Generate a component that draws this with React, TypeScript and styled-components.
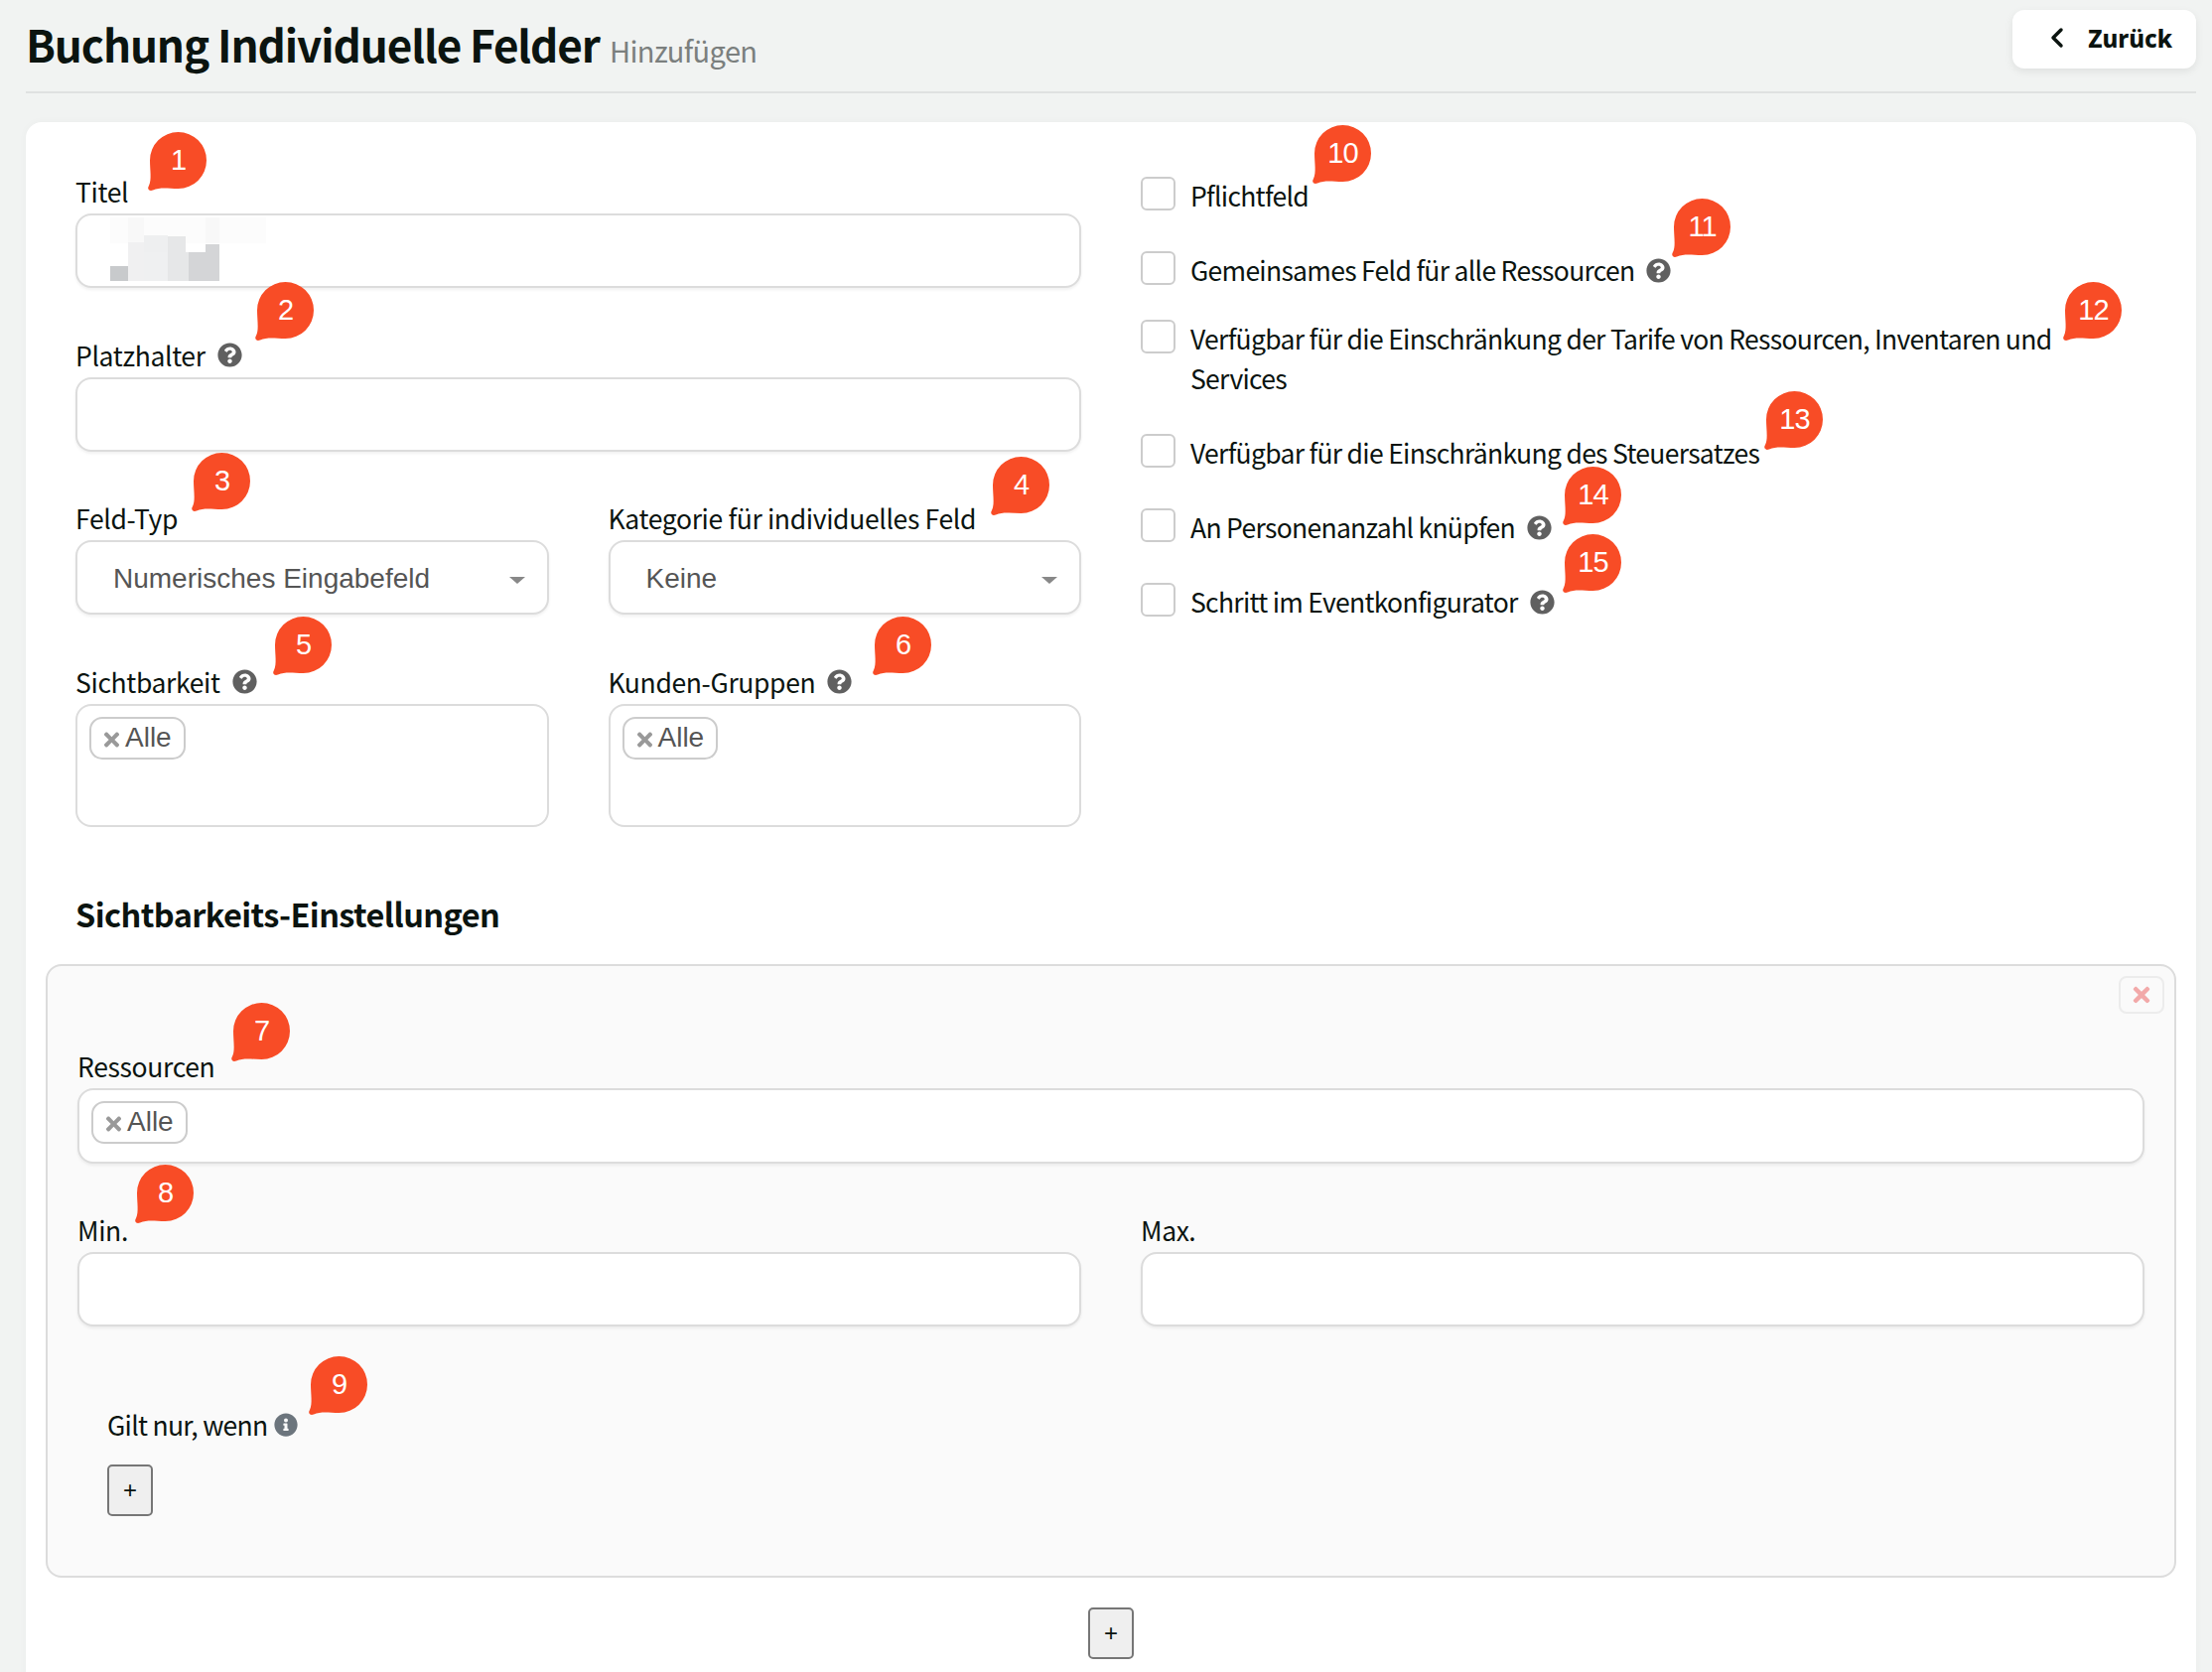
import {ReactNode} from "react";
import styled, {createGlobalStyle} from "styled-components";
import {ChevronLeft} from "lucide-react";
import {FaInfoCircle, FaQuestionCircle, FaTimes} from "react-icons/fa";

const GlobalStyle = createGlobalStyle`
    html, body {
        margin: 0;
        padding: 0;
        background: #f1f3f2;
        overflow: hidden;
    }
`;

const SANS = `"Noto Sans CJK SC", "Noto Sans", sans-serif`;
const HELVETICA = `"Liberation Sans", Arial, sans-serif`;

const Page = styled.div`
    position: relative;
    width: 2228px;
    height: 1684px;
    overflow: hidden;
    box-sizing: border-box;
    padding: 0 16px 0 26px;
    font-family: ${SANS};
    color: #0b1410;
    background: #f1f3f2;
`;

const Header = styled.header`
    display: flex;
    justify-content: space-between;
    align-items: flex-start;
    height: 92px;
    border-bottom: 2px solid #dfe1e1;
    box-sizing: content-box;
`;

const TitleLine = styled.div`
    display: flex;
    align-items: baseline;
    gap: 10px;
    padding-top: 14px;
    line-height: 60px;
`;

const Title = styled.h1`
    margin: 0;
    font-size: 44px;
    font-weight: 600;
    letter-spacing: -1.1px;
    line-height: 60px;
`;

const Subtitle = styled.small`
    font-size: 29px;
    letter-spacing: -0.6px;
    color: #7b7f7e;
`;

const BackButton = styled.button`
    display: flex;
    align-items: center;
    justify-content: flex-end;
    gap: 15px;
    width: 185px;
    height: 59px;
    margin-top: 10px;
    padding: 0 24px 3px 0;
    border: none;
    border-radius: 12px;
    background: #fff;
    box-shadow: 0 3px 8px rgba(0, 0, 0, 0.08);
    font-family: "Noto Sans", sans-serif;
    font-size: 24px;
    font-weight: 800;
    color: #0b1410;
`;

const Card = styled.main`
    margin-top: 29px;
    height: 1600px;
    box-sizing: border-box;
    padding: 52px 20px 0;
    background: #fff;
    border-radius: 16px 16px 0 0;
    box-shadow: 0 0 8px rgba(0, 0, 0, 0.03);
`;

const Section = styled.div`
    padding: 0 30px;
`;

const Columns = styled.div`
    display: grid;
    grid-template-columns: 1fr 1fr;
    column-gap: 60px;
`;

const PanelColumns = styled(Columns)`
    margin-top: 2px;
`;

const FieldBox = styled.div<{ $last?: boolean }>`
    margin-bottom: ${(p) => (p.$last ? 0 : "49.5px")};
`;

const Label = styled.label`
    display: flex;
    align-items: center;
    gap: 12px;
    height: 35px;
    margin-bottom: 5px;
    font-size: 26.5px;
    letter-spacing: -0.35px;
    line-height: 35px;
`;

const Control = styled.div<{ $tall?: boolean }>`
    position: relative;
    box-sizing: border-box;
    height: ${(p) => (p.$tall ? "124px" : "75px")};
    border: 2px solid #dcdcdc;
    border-radius: 16px;
    background: #fff;
    box-shadow: ${(p) => (p.$tall ? "none" : "0 2px 3px rgba(0, 0, 0, 0.06)")};
`;

const MultiControl = styled(Control)`
    padding: 11px 12px;
`;

const ResourceControl = styled(MultiControl)`
    height: 76px;
`;

const SelectControl = styled(Control)`
    display: flex;
    align-items: center;
    padding: 2px 22px 0 36px;
    font-family: ${HELVETICA};
    font-size: 28px;
    color: #555;
`;

const Caret = styled.span`
    margin-left: auto;
    width: 0;
    height: 0;
    border-left: 8px solid transparent;
    border-right: 8px solid transparent;
    border-top: 7px solid #888;
    margin-top: 3px;
`;

const Tag = styled.span`
    display: inline-flex;
    align-items: center;
    box-sizing: border-box;
    height: 43px;
    padding: 0 12px 0 10px;
    border: 2px solid #ccc;
    border-radius: 13px;
    background: #fff;
    font-family: ${HELVETICA};
    font-size: 28px;
    color: #555;

    svg {
        width: 21px;
        height: 22px;
        margin: 3px 3px 0 0;
        color: #999;
    }
`;

const HelpIcon = styled(FaQuestionCircle)`
    width: 25px;
    height: 25px;
    flex: none;
    color: #606060;
`;

const Blur = styled.svg`
    position: absolute;
    left: 33px;
    top: 2px;
`;

const OptionList = styled.div`
    padding-top: 2px;
`;

const OptionRow = styled.div<{ $tight?: boolean }>`
    display: flex;
    align-items: flex-start;
    gap: 15px;
    margin-bottom: ${(p) => (p.$tight ? "29px" : "35px")};
    font-size: 26.5px;
    letter-spacing: -0.7px;
    line-height: 40px;
`;

const Checkbox = styled.span`
    flex: none;
    box-sizing: border-box;
    width: 35px;
    height: 34px;
    margin-top: 1px;
    border: 2px solid #ccc;
    border-radius: 6px;
    background: #fff;
`;

const OptionText = styled.span`
    display: inline-flex;
    align-items: center;
    gap: 12px;
`;

const Heading = styled.h2`
    margin: 62px 0 26px;
    font-size: 32.5px;
    font-weight: 600;
    letter-spacing: -0.6px;
    line-height: 50px;
`;

const Panel = styled.section`
    position: relative;
    box-sizing: border-box;
    height: 618px;
    padding: 83px 30px 0;
    border: 2px solid #dcdcdc;
    border-radius: 16px;
    background: #fafafa;
`;

const RemoveButton = styled.button`
    position: absolute;
    top: 10px;
    right: 10px;
    display: flex;
    align-items: center;
    justify-content: center;
    width: 46px;
    height: 38px;
    padding: 0;
    border: 2px solid #ececec;
    border-radius: 8px;
    background: #fafafa;
    color: #f2a9a9;

    svg {
        width: 24px;
        height: 24px;
    }
`;

const ConditionBlock = styled.div`
    margin-top: 31px;
    padding-left: 30px;
`;

const ConditionLabel = styled.div`
    display: flex;
    align-items: center;
    gap: 6px;
    height: 36px;
    margin-bottom: 22px;
    font-size: 26.5px;
    letter-spacing: -0.7px;
    line-height: 36px;

    svg {
        width: 24px;
        height: 24px;
        color: #6c757d;
    }
`;

const AddButton = styled.button`
    display: flex;
    align-items: center;
    justify-content: center;
    box-sizing: border-box;
    width: 46px;
    height: 52px;
    padding: 0;
    border: 2px solid #767676;
    border-radius: 5px;
    background: #efefef;
    color: #0b1410;
    font-family: ${HELVETICA};
    font-size: 24px;
`;

const AddRow = styled.div`
    display: flex;
    justify-content: center;
    margin-top: 30px;
`;

const BubbleWrap = styled.div<{ $x: number; $y: number }>`
    position: absolute;
    left: ${(p) => p.$x - 31}px;
    top: ${(p) => p.$y - 29}px;
    width: 60px;
    height: 60px;
`;

const BubbleNumber = styled.span`
    position: absolute;
    left: 3px;
    top: 0;
    width: 57px;
    height: 57px;
    display: flex;
    align-items: center;
    justify-content: center;
    color: #fff;
    font-family: ${HELVETICA};
    font-size: 29px;
    letter-spacing: -1px;
`;

const bubbles: [number, number, number][] = [
    [1, 179, 162],
    [2, 287, 313],
    [3, 223, 485],
    [4, 1028, 489],
    [5, 305, 650],
    [6, 909, 650],
    [7, 263, 1039],
    [8, 166, 1202],
    [9, 341, 1395],
    [10, 1352, 155],
    [11, 1714, 229],
    [12, 2108, 313],
    [13, 1807, 423],
    [14, 1604, 499],
    [15, 1604, 567],
];

function Bubble({n, x, y}: { n: number; x: number; y: number }) {
    return <BubbleWrap $x={x} $y={y}>
        <svg width="60" height="60" viewBox="0 0 60 60">
            <path
                fill="#f84c26"
                d="M31.5 0A28.5 28.5 0 1 1 31.5 57C22 57 14 55 6 58.5C2 60 0 57 2 54C5 48 3 38 3 28.5A28.5 28.5 0 0 1 31.5 0Z"
            />
        </svg>
        <BubbleNumber>{n}</BubbleNumber>
    </BubbleWrap>
}

function Field({label, help, last, children}: { label: string; help?: boolean; last?: boolean; children: ReactNode }) {
    return <FieldBox $last={last}>
        <Label>{label}{help && <HelpIcon/>}</Label>
        {children}
    </FieldBox>
}

function AllTag() {
    return <Tag><FaTimes/>Alle</Tag>
}

function Option({text, help, tight}: { text: string; help?: boolean; tight?: boolean }) {
    return <OptionRow $tight={tight}>
        <Checkbox/>
        <OptionText>
            <span>{text}</span>
            {help && <HelpIcon/>}
        </OptionText>
    </OptionRow>
}

// pixelated patch that hides the title value in the screenshot
function BlurredValue() {
    const cells: [number, number, number, number, string][] = [
        [0, 0, 157, 26, "#fcfcfc"],
        [18, 0, 16, 26, "#f8f8f8"],
        [96, 0, 14, 26, "#f8f8f8"],
        [34, 18, 24, 17, "#eeeff0"],
        [58, 19, 18, 17, "#e6e7e8"],
        [18, 25, 16, 39, "#f0f0f1"],
        [34, 35, 24, 29, "#eff0f1"],
        [58, 35, 21, 29, "#e6e7e8"],
        [79, 35, 31, 29, "#d4d5d7"],
        [96, 27, 14, 8, "#d4d5d7"],
        [0, 49, 18, 15, "#c8cacc"],
    ];
    return <Blur width="157" height="64" viewBox="0 0 157 64">
        {cells.map(([x, y, w, h, fill], i) => <rect key={i} x={x} y={y} width={w} height={h} fill={fill}/>)}
    </Blur>
}

export default function App() {
    return <>
        <GlobalStyle/>
        <Page>
            <Header>
                <TitleLine>
                    <Title>Buchung Individuelle Felder</Title>
                    <Subtitle>Hinzufügen</Subtitle>
                </TitleLine>
                <BackButton><ChevronLeft size={32} strokeWidth={2.6}/>Zurück</BackButton>
            </Header>

            <Card>
                <Section>
                    <Columns>
                        <div>
                            <Field label="Titel">
                                <Control><BlurredValue/></Control>
                            </Field>
                            <Field label="Platzhalter" help>
                                <Control/>
                            </Field>
                            <Columns>
                                <Field label="Feld-Typ">
                                    <SelectControl>Numerisches Eingabefeld<Caret/></SelectControl>
                                </Field>
                                <Field label="Kategorie für individuelles Feld">
                                    <SelectControl>Keine<Caret/></SelectControl>
                                </Field>
                                <Field label="Sichtbarkeit" help last>
                                    <MultiControl $tall><AllTag/></MultiControl>
                                </Field>
                                <Field label="Kunden-Gruppen" help last>
                                    <MultiControl $tall><AllTag/></MultiControl>
                                </Field>
                            </Columns>
                        </div>
                        <OptionList>
                            <Option text="Pflichtfeld"/>
                            <Option text="Gemeinsames Feld für alle Ressourcen" help tight/>
                            <Option text="Verfügbar für die Einschränkung der Tarife von Ressourcen, Inventaren und Services"/>
                            <Option text="Verfügbar für die Einschränkung des Steuersatzes"/>
                            <Option text="An Personenanzahl knüpfen" help/>
                            <Option text="Schritt im Eventkonfigurator" help/>
                        </OptionList>
                    </Columns>
                    <Heading>Sichtbarkeits-Einstellungen</Heading>
                </Section>

                <Panel>
                    <RemoveButton><FaTimes/></RemoveButton>
                    <Field label="Ressourcen">
                        <ResourceControl><AllTag/></ResourceControl>
                    </Field>
                    <PanelColumns>
                        <Field label="Min.">
                            <Control/>
                        </Field>
                        <Field label="Max.">
                            <Control/>
                        </Field>
                    </PanelColumns>
                    <ConditionBlock>
                        <ConditionLabel>Gilt nur, wenn <FaInfoCircle/></ConditionLabel>
                        <AddButton>+</AddButton>
                    </ConditionBlock>
                </Panel>
                <AddRow><AddButton>+</AddButton></AddRow>
            </Card>

            {bubbles.map(([n, x, y]) => <Bubble key={n} n={n} x={x} y={y}/>)}
        </Page>
    </>
}
